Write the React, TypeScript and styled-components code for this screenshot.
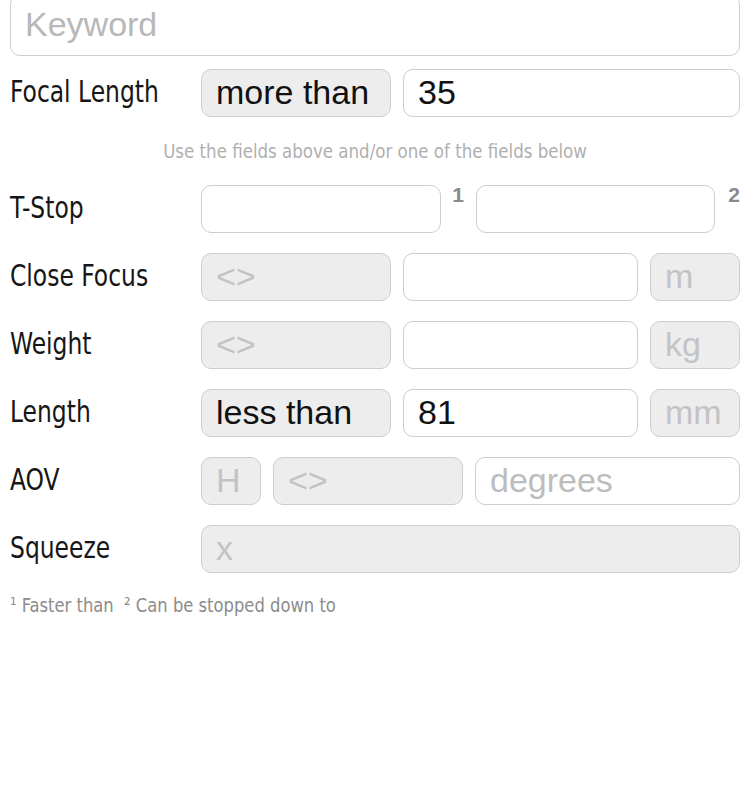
import styled, { createGlobalStyle } from "styled-components";

const GlobalStyle = createGlobalStyle`
  body {
    margin: 0;
    background: #fff;
    font-family: "Liberation Sans", Arial, sans-serif;
  }
`;

const Page = styled.div`
  width: 750px;
  height: 800px;
  overflow: hidden;
  padding: 0 10px;
  box-sizing: border-box;
`;

const Keyword = styled.input`
  display: block;
  width: 100%;
  height: 62px;
  margin: -6px 0 13px;
  box-sizing: border-box;
  border: 1px solid #cfcfcf;
  border-radius: 10px;
  padding: 0 14px 2px;
  font: 34px "Liberation Sans", Arial, sans-serif;
  color: #000;
  outline: none;
  &::placeholder {
    color: #b8b8b8;
  }
`;

const Row = styled.div`
  display: grid;
  grid-template-columns: 191px minmax(0, 1fr);
  align-items: center;
  height: 48px;
  margin-bottom: 20px;
`;

// condensed face: DejaVu Sans Condensed squeezed a little more
const Condensed = styled.span<{ $scale: number; $center?: boolean }>`
  display: inline-block;
  font-family: "DejaVu Sans Condensed", "DejaVu Sans", sans-serif;
  font-stretch: condensed;
  white-space: nowrap;
  transform: scaleX(${(p) => p.$scale});
  transform-origin: ${(p) => (p.$center ? "center" : "left")} center;
`;

const Label = styled(Condensed)`
  font-size: 31px;
  color: #161616;
  padding-bottom: 4px;
`;

const Fields = styled.div<{ $gap?: number }>`
  display: flex;
  gap: ${(p) => p.$gap ?? 12}px;
  height: 48px;
  min-width: 0;
`;

const Box = styled.div<{ $w?: number; $muted?: boolean }>`
  ${(p) => (p.$w ? `width: ${p.$w}px; flex: none;` : "flex: 1; min-width: 0;")}
  height: 48px;
  box-sizing: border-box;
  border: 1px solid #cdcdcd;
  border-radius: 10px;
  background: #ededed;
  padding: 0 14px 2px;
  display: flex;
  align-items: center;
  font-size: 34px;
  color: ${(p) => (p.$muted ? "#c3c3c6" : "#111")};
  white-space: nowrap;
  overflow: hidden;
`;

const TextField = styled.input`
  flex: 1;
  width: 0;
  min-width: 0;
  height: 48px;
  box-sizing: border-box;
  border: 1px solid #cdcdcd;
  border-radius: 10px;
  background: #fff;
  padding: 0 14px 2px;
  font: 34px "Liberation Sans", Arial, sans-serif;
  color: #111;
  outline: none;
  &::placeholder {
    color: #bdbdbd;
  }
`;

const Sup = styled.span<{ $right?: boolean }>`
  flex: none;
  width: ${(p) => (p.$right ? "25px" : "35px")};
  text-align: ${(p) => (p.$right ? "right" : "center")};
  align-self: flex-start;
  margin-top: -2px;
  font-size: 21px;
  font-weight: bold;
  color: #8a8a8a;
`;

const Hint = styled.div`
  height: 68px;
  margin-top: -20px;
  display: flex;
  align-items: center;
  justify-content: center;
  font-size: 20px;
  color: #b0b0b0;
`;

const Note = styled.div`
  margin-top: 11px;
  font-size: 20px;
  color: #8c8c8c;
`;

const App = () => {
  return (
    <>
      <GlobalStyle />
      <Page>
        <Keyword placeholder="Keyword" readOnly />
        <Row>
          <Label $scale={0.84}>Focal Length</Label>
          <Fields>
            <Box $w={190}>more than</Box>
            <TextField defaultValue="35" readOnly />
          </Fields>
        </Row>
        <Hint>
          <Condensed $scale={0.925} $center>
            Use the fields above and/or one of the fields below
          </Condensed>
        </Hint>
        <Row>
          <Label $scale={0.84}>T-Stop</Label>
          <Fields $gap={0}>
            <TextField readOnly />
            <Sup>1</Sup>
            <TextField readOnly />
            <Sup $right>2</Sup>
          </Fields>
        </Row>
        <Row>
          <Label $scale={0.84}>Close Focus</Label>
          <Fields>
            <Box $w={190} $muted>&lt;&gt;</Box>
            <TextField readOnly />
            <Box $w={90} $muted>m</Box>
          </Fields>
        </Row>
        <Row>
          <Label $scale={0.84}>Weight</Label>
          <Fields>
            <Box $w={190} $muted>&lt;&gt;</Box>
            <TextField readOnly />
            <Box $w={90} $muted>kg</Box>
          </Fields>
        </Row>
        <Row>
          <Label $scale={0.84}>Length</Label>
          <Fields>
            <Box $w={190}>less than</Box>
            <TextField defaultValue="81" readOnly />
            <Box $w={90} $muted>mm</Box>
          </Fields>
        </Row>
        <Row>
          <Label $scale={0.84}>AOV</Label>
          <Fields>
            <Box $w={60} $muted>H</Box>
            <Box $w={190} $muted>&lt;&gt;</Box>
            <TextField placeholder="degrees" readOnly />
          </Fields>
        </Row>
        <Row>
          <Label $scale={0.84}>Squeeze</Label>
          <Fields>
            <Box $muted>x</Box>
          </Fields>
        </Row>
        <Note>
          <Condensed $scale={0.91}>¹ Faster than&nbsp; ² Can be stopped down to</Condensed>
        </Note>
      </Page>
    </>
  );
};

export default App;
